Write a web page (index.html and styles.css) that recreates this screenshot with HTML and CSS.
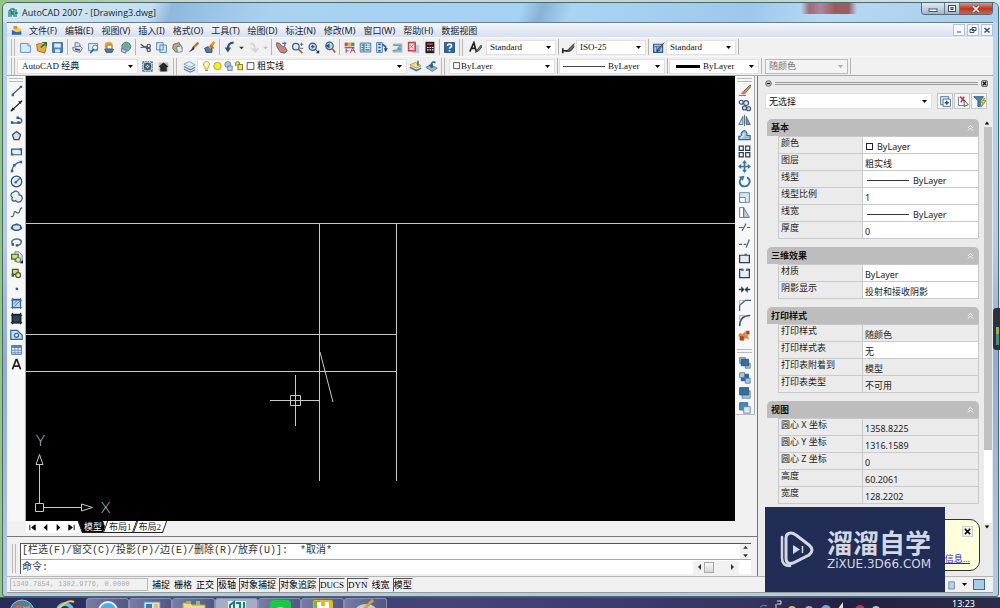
FILE: index.html
```html
<!DOCTYPE html>
<html lang="zh-CN">
<head>
<meta charset="utf-8">
<title>AutoCAD 2007 - [Drawing3.dwg]</title>
<link rel="stylesheet" href="styles.css">
</head>
<body>
<div class="window">
  <header class="titlebar">
    <svg class="app-icon" viewBox="0 0 10 10"><rect width="10" height="10" fill="#e4f4f2"/><path d="M1 9V3l2-2v8M4 1h2v3H4v2h2v3M8 1v8M7 5h3" stroke="#12807c" fill="none" stroke-width="1.3"/></svg>
    <h1 class="title">AutoCAD 2007 - [Drawing3.dwg]</h1>
    <div class="win-buttons">
      <button class="win-btn" aria-label="最小化"><svg viewBox="0 0 10 8"><rect x="1" y="4" width="8" height="2.5" fill="#fff" stroke="#556"/></svg></button>
      <button class="win-btn win-max" aria-label="最大化"><svg viewBox="0 0 10 8"><rect x="1.5" y=".5" width="7" height="6" fill="#fff" stroke="#445"/><rect x="4" y="2.500" width="2" height="2" fill="#89a" stroke="#445"/></svg></button>
      <button class="win-btn win-close" aria-label="关闭"><svg viewBox="0 0 10 8"><path d="M2 1l6 6M8 1L2 7" stroke="#733" stroke-width="3"/><path d="M2 1l6 6M8 1L2 7" stroke="#fff" stroke-width="1.7"/></svg></button>
    </div>
  </header>
  <div class="client">
    <nav class="menubar">
      <svg class="doc-icon" viewBox="0 0 14 12"><path d="M2 6l5-5 5 4v6H2z" fill="#f8cf3b"/><path d="M1 5l5 3 6-1v4H1z" fill="#2f67b8"/><path d="M3 1h4v3H3z" fill="#d8842a"/></svg>
      <button>文件(F)</button><button>编辑(E)</button><button>视图(V)</button><button>插入(I)</button><button>格式(O)</button><button>工具(T)</button><button>绘图(D)</button><button>标注(N)</button><button>修改(M)</button><button>窗口(W)</button><button>帮助(H)</button><button>数据视图</button>
      <div class="mdi">
        <button aria-label="最小化文档"><svg viewBox="0 0 10 10"><path d="M3 7h4" stroke="#357"/></svg></button>
        <button aria-label="还原文档"><svg viewBox="0 0 10 10"><path d="M4 2.500h4v3H4zM2 4.500h4v3H2z" fill="#fff" stroke="#357"/></svg></button>
        <button aria-label="关闭文档"><svg viewBox="0 0 10 10"><path d="M2.500 3l5 4.500M7.500 3l-5 4.500" stroke="#357" stroke-width="1.5"/></svg></button>
      </div>
    </nav>

    <div class="toolbar">
      <i class="grip"></i>
      <button class="tool" aria-label="新建"><svg viewBox="0 0 16 16"><path d="M2 3h9l3 3v8H2z" fill="#d5ebfa" stroke="#467fae"/><path d="M11 3v3h3" fill="#fff" stroke="#467fae"/></svg></button>
      <button class="tool" aria-label="打开"><svg viewBox="0 0 16 16"><path d="M2 4l5-1 7 3-2 9-9-3z" fill="#e5ad45" stroke="#8b682b"/><path d="M7 8l6-5M9 2h5v4" stroke="#286330" stroke-width="1.500" fill="none"/></svg></button>
      <button class="tool" aria-label="保存"><svg viewBox="0 0 16 16"><path d="M2 2h12v12H2z" fill="#4a87c5" stroke="#245487"/><path d="M4 3h8v5H4zM5 10h6v4H5z" fill="#dfeef9"/></svg></button>
      <i class="sep"></i>
      <button class="tool" aria-label="打印"><svg viewBox="0 0 16 16"><path d="M5 7V2h4l2 2v3M2 8l9-2 3 3-3 5-8-2z" fill="#dce2ee" stroke="#53648c"/><path d="M5 10l6 1" stroke="#334a85" stroke-width="2"/></svg></button>
      <button class="tool" aria-label="打印预览"><svg viewBox="0 0 16 16"><path d="M2 3h11v9H2z" fill="#d5e9f8" stroke="#477bac"/><circle cx="10" cy="8" r="3" fill="#eff8ff" stroke="#396389"/><path d="M8 10l-4 5" stroke="#396389" stroke-width="2"/></svg></button>
      <button class="tool" aria-label="发布"><svg viewBox="0 0 16 16"><circle cx="7" cy="6" r="5" fill="#e7a736"/><path d="M5 5h6v5H5z" fill="#fff" stroke="#776040"/><path d="M2 10h11l-2 4H4z" fill="#497db8" stroke="#2c5075"/></svg></button>
      <button class="tool" aria-label="三维发布"><svg viewBox="0 0 16 16"><circle cx="9" cy="7" r="5.500" fill="#73a9b8" stroke="#45697e"/><path d="M5 4l5-1 3 5-5 1z" fill="#6cae73"/><path d="M3 9l6 2-1 4-5-2z" fill="#bacbda" stroke="#496985"/></svg></button>
      <i class="sep"></i>
      <button class="tool" aria-label="剪切"><svg viewBox="0 0 16 16"><path d="M2 4l9 6M2 8l9-1" stroke="#455260" stroke-width="1.500"/><circle cx="12" cy="6" r="2" fill="none" stroke="#445767" stroke-width="1.500"/><circle cx="12" cy="11" r="2" fill="none" stroke="#445767" stroke-width="1.500"/></svg></button>
      <button class="tool" aria-label="复制"><svg viewBox="0 0 16 16"><path d="M2 2h8v9H2zM6 5h8v9H6z" fill="#d7ebfa" stroke="#3e76a8"/></svg></button>
      <button class="tool" aria-label="粘贴"><svg viewBox="0 0 16 16"><path d="M3 4l7-2 4 7-8 5-4-5z" fill="#b7aa80" stroke="#655e4a"/><path d="M7 7l6-1 1 7-6 1z" fill="#dceaf3" stroke="#628099"/></svg></button>
      <button class="tool" aria-label="特性匹配"><svg viewBox="0 0 16 16"><path d="M14 2L7 9" stroke="#b77832" stroke-width="3"/><path d="M8 7L2 14l7-4z" fill="#273440"/></svg></button>
      <button class="tool" aria-label="块编辑器"><svg viewBox="0 0 16 16"><path d="M2 9l4-2 5 2v5H4z" fill="#507cad" stroke="#243f5d"/><path d="M14 1L8 9" stroke="#e59421" stroke-width="3"/><path d="M9 5l4 4" stroke="#c45d25" stroke-width="2"/></svg></button>
      <i class="sep"></i>
      <button class="tool" aria-label="放弃"><svg viewBox="0 0 16 16"><path d="M13 2c-5 0-7 3-7 8" fill="none" stroke="#285180" stroke-width="2.500"/><path d="M2 8h8l-4 6z" fill="#285180"/></svg></button>
      <button class="tool tiny" aria-label="放弃列表"><svg viewBox="0 0 8 16"><path d="M1 7h6L4 10z" fill="#333"/></svg></button>
      <button class="tool" aria-label="重做"><svg viewBox="0 0 16 16"><path d="M4 3c4 0 6 3 6 8M6 9l4 4 4-4" fill="none" stroke="#cbd0d4" stroke-width="2"/></svg></button>
      <button class="tool tiny" aria-label="重做列表"><svg viewBox="0 0 8 16"><path d="M1 7h6L4 10z" fill="#bbb"/></svg></button>
      <i class="sep"></i>
      <button class="tool" aria-label="实时平移"><svg viewBox="0 0 16 16"><path d="M2 2l4 1 2 3 4 1 3 5-3 3-5-1-3-4-2-4z" fill="#c18b7b" stroke="#734c55"/><path d="M9 3h5M12 1v5" stroke="#3974ad" stroke-width="1.500"/></svg></button>
      <button class="tool" aria-label="实时缩放"><svg viewBox="0 0 16 16"><circle cx="6" cy="7" r="4" fill="#d9efff" stroke="#385c80" stroke-width="1.500"/><path d="M9 10l5 5" stroke="#986734" stroke-width="2"/><path d="M11 4h4M13 2v4M11 9h4" stroke="#2c5680"/></svg></button>
      <button class="tool" aria-label="窗口缩放"><svg viewBox="0 0 16 16"><circle cx="7" cy="7" r="4.500" fill="#b9d8ee" stroke="#385c80" stroke-width="1.500"/><path d="M10 10l4 4M5 7h4M7 5v4" stroke="#2c5680" stroke-width="1.500"/><path d="M11 15h4v-4z" fill="#222"/></svg></button>
      <button class="tool" aria-label="缩放上一个"><svg viewBox="0 0 16 16"><circle cx="8" cy="6" r="4.500" fill="#b9d8ee" stroke="#385c80" stroke-width="1.500"/><path d="M11 9l4 5" stroke="#986734" stroke-width="2"/><path d="M3 6l5-3v6z" fill="#204b80"/></svg></button>
      <i class="sep"></i>
      <button class="tool" aria-label="特性"><svg viewBox="0 0 16 16"><path d="M2 2h4v4H2z" fill="#dc4145"/><path d="M6 2h4v4H6z" fill="#eab42e"/><path d="M10 2h4v4h-4z" fill="#489253"/><path d="M2 7h12v2H2z" fill="#5b76aa"/><path d="M4 9v6M3 12h4M9 15l3-7 3 7M10 12h4" stroke="#a33553" fill="none"/></svg></button>
      <button class="tool" aria-label="设计中心"><svg viewBox="0 0 16 16"><path d="M1.500 2.500h13v11h-13z" fill="#cbe3f3" stroke="#366a98"/><path d="M6 3v10M3 5h2M3 8h2M3 11h2M8 5h2M12 5h1M8 8h2M12 8h1M8 11h5" stroke="#3e6d92" stroke-width="1.500"/></svg></button>
      <button class="tool" aria-label="工具选项板"><svg viewBox="0 0 16 16"><path d="M2 2h7v12H2z" fill="#cbe3f3" stroke="#366a98"/><path d="M4 4h3M4 8h3M4 12h3M9 4l4 3v6" fill="none" stroke="#2c5aa0" stroke-width="2"/><path d="M11 9h5l-3 4z" fill="#234a82"/></svg></button>
      <button class="tool" aria-label="图纸集"><svg viewBox="0 0 16 16"><path d="M3 3h11v11H2z" fill="#9db5c8"/><path d="M2 5l10 1-4 3 4 1-10 2" fill="#e0ebf2" stroke="#55809f"/></svg></button>
      <button class="tool" aria-label="标记集"><svg viewBox="0 0 16 16"><path d="M7 5h8v10H7z" fill="#bfccd6"/><path d="M2 2h8v10H2z" fill="#fff" stroke="#d13c4d" stroke-width="2"/><path d="M4 9l4-5M4 5l4 5" stroke="#d13c4d"/></svg></button>
      <button class="tool" aria-label="计算器"><svg viewBox="0 0 16 16"><path d="M3 1h11v14H3z" fill="#241f23"/><path d="M5 3h7v2H5z" fill="#c44548"/><path d="M5 8h2M8 8h2M11 8h2M5 11h2M8 11h2M11 11h2" stroke="#eee" stroke-width="1.500"/></svg></button>
      <i class="sep"></i>
      <button class="tool" aria-label="帮助"><svg viewBox="0 0 16 16"><rect x="2" y="2" width="12" height="12" fill="#2d669b" stroke="#194368"/><path d="M5.500 6c0-3 5-3 5 0 0 2-2.500 1.500-2.500 3.500M8 11v2" fill="none" stroke="#fff" stroke-width="2"/></svg></button>
      <i class="grip"></i>
      <button class="tool style-tool" aria-label="文字样式"><svg viewBox="0 0 16 16"><path d="M1 13L6 2l3 11M3 9h5" stroke="#222" stroke-width="2" fill="none"/><path d="M15 5l-5 6-2 3 4-2 4-5z" fill="#747c82" stroke="#333"/></svg></button>
      <span class="combo style-combo"><select aria-label="文字样式"><option>Standard</option></select><svg class="arrow" viewBox="0 0 7 4"><path d="M0 0h7L3.500 4z"/></svg></span>
      <i class="sep"></i>
      <button class="tool" aria-label="标注样式"><svg viewBox="0 0 16 16"><path d="M1 9v6M1 12h9" stroke="#222" stroke-width="2"/><path d="M15 3L8 10l-3 3 6-1 4-5" fill="#646a6b" stroke="#222"/></svg></button>
      <span class="combo style-combo"><select aria-label="标注样式"><option>ISO-25</option></select><svg class="arrow" viewBox="0 0 7 4"><path d="M0 0h7L3.500 4z"/></svg></span>
      <i class="sep"></i>
      <button class="tool" aria-label="表格样式"><svg viewBox="0 0 16 16"><path d="M2 4h11v10H2z" fill="#aacbea" stroke="#2a5b91" stroke-width="1.500"/><path d="M3 7h9M6 7v7" stroke="#2a5b91"/><path d="M15 2L7 10l-1 3 4-2" fill="#617d90" stroke="#234"/></svg></button>
      <span class="combo style-combo"><select aria-label="表格样式"><option>Standard</option></select><svg class="arrow" viewBox="0 0 7 4"><path d="M0 0h7L3.500 4z"/></svg></span>
      <i class="sep"></i>
    </div>

    <div class="toolbar">
      <i class="grip"></i>
      <span class="combo workspace-combo"><select aria-label="工作空间"><option>AutoCAD 经典</option></select><svg class="arrow" viewBox="0 0 7 4"><path d="M0 0h7L3.500 4z"/></svg></span>
      <button class="tool" aria-label="工作空间设置"><svg viewBox="0 0 16 16"><path d="M2 2h12v12H2z" fill="#bfcedb" stroke="#4e6477" stroke-dasharray="2 1"/><circle cx="8" cy="8" r="3.500" fill="none" stroke="#304d68" stroke-width="2"/><path d="M2 2l12 12M14 2L2 14" stroke="#526c81"/></svg></button>
      <button class="tool" aria-label="我的工作空间"><svg viewBox="0 0 16 16"><path d="M2 3h12v11H2z" fill="#bcc0c4"/><path d="M2 8l6-5 6 5-2 1v5H4V9z" fill="#282828"/></svg></button>
      <i class="grip grip-wide"></i>
      <button class="tool" aria-label="图层特性"><svg viewBox="0 0 16 16"><path d="M1 5l7-3 7 4-6 3z" fill="#e3eef5" stroke="#6e9abd"/><path d="M1 8l8 4 6-3M1 11l8 4 6-3" stroke="#4c7fa8" stroke-width="1.500" fill="none"/></svg></button>
      <span class="combo layer-combo">
        <svg class="mini" viewBox="0 0 12 16"><path d="M4 10C0 5 3 2 6 2s6 3 2 8v2H4z" fill="#fff59c" stroke="#958a40"/><path d="M4 14h4" stroke="#555"/></svg>
        <svg class="mini" viewBox="0 0 12 16"><circle cx="6" cy="8" r="5" fill="#f4ed2a" stroke="#968e28"/></svg>
        <svg class="mini" viewBox="0 0 12 16"><circle cx="5" cy="6" r="4" fill="#a9c4d7" stroke="#58788f"/><path d="M5 8h6v6H5z" fill="#b2d3e9" stroke="#58788f"/></svg>
        <svg class="mini" viewBox="0 0 12 16"><path d="M1 8V4q3-4 5 0v3M4 6h6v7H4z" fill="#f2e660" stroke="#8c862e" stroke-width="1.500"/></svg>
        <svg class="mini" viewBox="0 0 12 16"><path d="M1.500 3.500h9v9h-9z" fill="#fff" stroke="#222"/></svg>
        <select aria-label="图层"><option>粗实线</option></select><svg class="arrow" viewBox="0 0 7 4"><path d="M0 0h7L3.500 4z"/></svg></span>
      <button class="tool" aria-label="置为当前"><svg viewBox="0 0 16 16"><path d="M1 6l7-3 7 4-6 3z" fill="#eee27c" stroke="#a49136"/><path d="M1 9l8 4 6-3" stroke="#4c7fa8" stroke-width="2" fill="none"/><path d="M11 1v6" stroke="#416e98" stroke-width="2"/></svg></button>
      <button class="tool" aria-label="上一个图层"><svg viewBox="0 0 16 16"><path d="M1 9l6-3 8 4-6 4z" fill="#9bb8cf" stroke="#45708f"/><path d="M13 3C7 1 7 7 10 9" stroke="#305b84" stroke-width="2" fill="none"/><path d="M4 6l6-1-2 5z" fill="#305b84"/></svg></button>
      <i class="grip grip-wide"></i>
      <span class="combo prop-combo"><svg class="mini swatch" viewBox="0 0 10 16"><path d="M.5 3.500h8v8h-8z" fill="#fff" stroke="#222"/></svg><select aria-label="颜色"><option>ByLayer</option></select><svg class="arrow" viewBox="0 0 7 4"><path d="M0 0h7L3.500 4z"/></svg></span>
      <i class="sep"></i>
      <span class="combo prop-combo"><i class="line-sample"></i><select aria-label="线型"><option>ByLayer</option></select><svg class="arrow" viewBox="0 0 7 4"><path d="M0 0h7L3.500 4z"/></svg></span>
      <i class="sep"></i>
      <span class="combo weight-combo"><i class="line-sample thick"></i><select aria-label="线宽"><option>ByLayer</option></select><svg class="arrow" viewBox="0 0 7 4"><path d="M0 0h7L3.500 4z"/></svg></span>
      <i class="sep"></i>
      <span class="combo plot-combo"><select aria-label="打印样式" disabled><option>随颜色</option></select><svg class="arrow" viewBox="0 0 7 4"><path d="M0 0h7L3.500 4z"/></svg></span>
      <i class="sep"></i>
    </div>

    <main class="workspace">
      <section class="editor">
        <div class="drawing-row">
          <aside class="side-tools">
            <i class="hgrip"></i>
            <div class="draw-list">
              <button class="tool" aria-label="直线"><svg viewBox="0 0 16 16"><path d="M3 13L13 4" stroke="#345d80" stroke-width="1.500"/><path d="M2 12h3v3H2zM12 2h3v3h-3z" fill="#2e6799"/></svg></button>
              <button class="tool" aria-label="构造线"><svg viewBox="0 0 16 16"><path d="M1 15L15 2" stroke="#202830" stroke-width="1.500"/><path d="M1 15l2-5 3 3zM15 2l-5 1 3 3z" fill="#222"/></svg></button>
              <button class="tool" aria-label="多段线"><svg viewBox="0 0 16 16"><path d="M2 11h10c4-1 3-6-2-6" fill="none" stroke="#376f9b" stroke-width="1.800"/><path d="M1 9h3v3H1zM9 9h3v3H9zM8 3h3v3H8z" fill="#275b88"/></svg></button>
              <button class="tool" aria-label="正多边形"><svg viewBox="0 0 16 16"><path d="M8 3l5 4-2 6H5L3 7z" fill="#d8e0e5" stroke="#374b5b" stroke-width="1.500"/></svg></button>
              <button class="tool" aria-label="矩形"><svg viewBox="0 0 16 16"><path d="M2 5h12v7H2z" fill="#e4edf3" stroke="#3b5670" stroke-width="1.500"/><path d="M1 10h3v3H1zM12 4h3v3h-3z" fill="#346b9b"/></svg></button>
              <button class="tool" aria-label="圆弧"><svg viewBox="0 0 16 16"><path d="M2 15Q3 4 14 2" fill="none" stroke="#396b94" stroke-width="1.500"/><path d="M1 12h3v3H1zM4 5h3v3H4zM12 1h3v3h-3z" fill="#2e6799"/></svg></button>
              <button class="tool" aria-label="圆"><svg viewBox="0 0 16 16"><circle cx="8" cy="8" r="6.500" fill="#e5edf3" stroke="#2b4e6d" stroke-width="1.500"/><path d="M7 9l5-5" stroke="#28689b" stroke-width="1.500"/><circle cx="7" cy="9" r="1.500" fill="#28689b"/></svg></button>
              <button class="tool" aria-label="修订云线"><svg viewBox="0 0 16 16"><path d="M4 3c3-3 8-1 7 3 5 0 5 6 2 8-3 2-6 0-6-1-3 2-6-1-4-4-3-1-2-6 1-6z" fill="#eaf1f6" stroke="#3f5e78" stroke-width="1.500"/></svg></button>
              <button class="tool" aria-label="样条曲线"><svg viewBox="0 0 16 16"><path d="M1 13c5 1 3-6 5-6s3 3 5 1 0-5 4-6" fill="none" stroke="#4b5c6a" stroke-width="1.400"/></svg></button>
              <button class="tool" aria-label="椭圆"><svg viewBox="0 0 16 16"><ellipse cx="8" cy="8" rx="5.500" ry="3.500" fill="#d7e6f0" stroke="#274864" stroke-width="1.500"/><path d="M1 7h3v3H1zM12 7h3v3h-3zM7 3h3v2H7z" fill="#24689d"/></svg></button>
              <button class="tool" aria-label="椭圆弧"><svg viewBox="0 0 16 16"><path d="M3 10C0 5 6 3 11 4c5 2 3 7-2 8" fill="none" stroke="#427295" stroke-width="1.800"/><path d="M2 9h3v3H2zM7 10h3v3H7z" fill="#275b88"/></svg></button>
              <button class="tool" aria-label="插入块"><svg viewBox="0 0 16 16"><path d="M6 1h5l4 4v8H6z" fill="#d1e6f5" stroke="#49799e"/><path d="M2 4h8v6H2z" fill="#cee36e" stroke="#48632a" stroke-width="1.500"/><circle cx="10" cy="11" r="3" fill="#e2edaf" stroke="#425437"/><path d="M12 15h4v-4z"/></svg></button>
              <button class="tool" aria-label="创建块"><svg viewBox="0 0 16 16"><path d="M3 3h7v6H3z" fill="#d0df7c" stroke="#475f2b" stroke-width="1.500"/><circle cx="10" cy="10" r="3" fill="#e4edb9" stroke="#475f2b" stroke-width="1.500"/><path d="M2 8h3v4H2z" fill="#35536b"/></svg></button>
              <button class="tool" aria-label="点"><svg viewBox="0 0 16 16"><path d="M7 7h3v3H7z" fill="#246291"/></svg></button>
              <button class="tool" aria-label="图案填充"><svg viewBox="0 0 16 16"><path d="M3 3h10v10H3z" fill="#b9d4ec" stroke="#2c5a87" stroke-width="1.500"/><path d="M3 1v14M13 1v14M1 4h14M1 13h14M5 12l7-7M5 8l4-4" stroke="#3e6e99"/></svg></button>
              <button class="tool" aria-label="渐变色"><svg viewBox="0 0 16 16"><path d="M3 3h10v10H3z" fill="#30465a" stroke="#17222b" stroke-width="2"/><path d="M3 1v14M13 1v14M1 4h14M1 13h14" stroke="#1e2b36" stroke-width="1.500"/></svg></button>
              <button class="tool" aria-label="面域"><svg viewBox="0 0 16 16"><path d="M1 14V3h8l6 6v5z" fill="#c8dff0" stroke="#2d6899" stroke-width="1.500"/><circle cx="8" cy="9" r="2.500" fill="#f3f8fb" stroke="#2d6899" stroke-width="1.500"/></svg></button>
              <button class="tool" aria-label="表格"><svg viewBox="0 0 16 16"><path d="M2 3h12v11H2z" fill="#dfeaf9" stroke="#3d60a2"/><path d="M2 3h12v3H2z" fill="#547bc0"/><path d="M2 9h12M2 12h12M6 5v9M10 5v9" stroke="#6484c2"/></svg></button>
              <button class="tool" aria-label="多行文字"><svg viewBox="0 0 16 16"><path d="M3 14L7.500 2h1L13 14M5 10h6" stroke="#222" stroke-width="2" fill="none"/></svg></button>
            </div>
          </aside>
          <div class="canvas">
            <svg class="drawing" viewBox="0 0 709 445" preserveAspectRatio="xMinYMin slice">
              <g stroke="#c9c9c9" fill="none">
                <path d="M0 147.500H709M0 258.500H370M0 295.500H370M293.500 147V405M370.500 147V405M294 276L307 326"/>
                <path d="M244 324.500H294M269.500 299V350M264.500 319.500h10v10h-10z"/>
                <path d="M9.500 427.500h8v8h-8zM13.500 427V389M10 388.500h7l-3.500-10zM17 431.500H55M55.500 428v7l11-3.500z"/>
              </g>
              <text x="75" y="437">X</text><text x="10" y="370">Y</text>
            </svg>
          </div>
          <aside class="side-tools right-tools">
            <i class="hgrip"></i>
            <div class="modify-list">
              <button class="tool" aria-label="删除"><svg viewBox="0 0 16 16"><path d="M15 1L7 9l2 2 7-8z" fill="#c7a456" stroke="#665334"/><path d="M7 8l-4 4 5 1 2-2z" fill="#d67c6a"/><path d="M1 14h9" stroke="#555"/></svg></button>
              <button class="tool" aria-label="复制对象"><svg viewBox="0 0 16 16"><circle cx="4" cy="4" r="2.500" fill="#dfe8ee" stroke="#38556d" stroke-width="1.400"/><circle cx="10" cy="5" r="3" fill="#dfe8ee" stroke="#38556d" stroke-width="1.400"/><circle cx="8" cy="11" r="2.500" fill="#c3dbea" stroke="#38556d" stroke-width="1.400"/><circle cx="13" cy="12" r="2.500" fill="#c3dbea" stroke="#38556d" stroke-width="1.400"/></svg></button>
              <button class="tool" aria-label="镜像"><svg viewBox="0 0 16 16"><path d="M6 3v10H1z" fill="#cfdde8" stroke="#375974"/><path d="M10 3v10h5z" fill="#6b9dc5" stroke="#375974"/><path d="M8 1v14" stroke="#37536a"/></svg></button>
              <button class="tool" aria-label="偏移"><svg viewBox="0 0 16 16"><path d="M1 13V9h3V5q4-6 7 0v3h4v5z" fill="#9bc4e4" stroke="#35688e" stroke-width="1.400"/><path d="M4 12V9h3V5" stroke="#fff" fill="none"/></svg></button>
              <button class="tool" aria-label="阵列"><svg viewBox="0 0 16 16"><path d="M1.500 1.500h5v5h-5zM9.500 1.500h5v5h-5zM1.500 9.500h5v5h-5zM9.500 9.500h5v5h-5z" fill="#fff" stroke="#303b45" stroke-width="1.500"/></svg></button>
              <button class="tool" aria-label="移动"><svg viewBox="0 0 16 16"><path d="M8 0l3 4H9v3h3V5l4 3-4 3V9H9v3h2l-3 4-3-4h2V9H4v2L0 8l4-3v2h3V4H5z" fill="#3975aa"/></svg></button>
              <button class="tool" aria-label="旋转"><svg viewBox="0 0 16 16"><path d="M5 3c-5 4-3 11 3 11s9-8 3-11" fill="none" stroke="#39739f" stroke-width="2.300"/><path d="M1 2l7-1-2 6z" fill="#39739f"/></svg></button>
              <button class="tool" aria-label="缩放"><svg viewBox="0 0 16 16"><path d="M2 2h12v12H2z" fill="#d4e5f2" stroke="#527997"/><path d="M2 8h7v6H2z" fill="#fff" stroke="#527997"/></svg></button>
              <button class="tool" aria-label="拉伸"><svg viewBox="0 0 16 16"><path d="M2 2h5v12H2z" fill="#fff" stroke="#48667f"/><path d="M7 2l7 12H7z" fill="#bdd2e1" stroke="#48667f"/></svg></button>
              <button class="tool" aria-label="修剪"><svg viewBox="0 0 16 16"><path d="M1 8h5M11 8h4M5 12l5-9" stroke="#316691" stroke-width="1.500"/></svg></button>
              <button class="tool" aria-label="延伸"><svg viewBox="0 0 16 16"><path d="M1 9h4M7 9h3M10 13l4-10" stroke="#316691" stroke-width="1.500"/></svg></button>
              <button class="tool" aria-label="打断于点"><svg viewBox="0 0 16 16"><path d="M2 4h12v9H2z" fill="#e6edf2" stroke="#303e4d" stroke-width="1.500"/><path d="M8 2h3v3H8z" fill="#3a74a2"/></svg></button>
              <button class="tool" aria-label="打断"><svg viewBox="0 0 16 16"><path d="M6 3H2v10h12V3h-4" fill="#e6edf2" stroke="#303e4d" stroke-width="1.500"/><path d="M4 2h3v3H4zM10 2h3v3h-3z" fill="#3a74a2"/></svg></button>
              <button class="tool" aria-label="合并"><svg viewBox="0 0 16 16"><path d="M1 8h5M10 8h5" stroke="#203f5b" stroke-width="2"/><path d="M4 4l4 4-4 4zM12 4L8 8l4 4z" fill="#203f5b"/></svg></button>
              <button class="tool" aria-label="倒角"><svg viewBox="0 0 16 16"><path d="M2 16V9l7-6h7" fill="none" stroke="#3c6481" stroke-width="1.500"/><path d="M2 9V3h7" stroke="#9daab4" fill="none"/></svg></button>
              <button class="tool" aria-label="圆角"><svg viewBox="0 0 16 16"><path d="M2 16Q2 3 15 3" fill="none" stroke="#265c86" stroke-width="2"/><path d="M2 9V3h7" stroke="#9daab4" fill="none"/></svg></button>
              <button class="tool" aria-label="分解"><svg viewBox="0 0 16 16"><path d="M2 5l4 1 3-4 1 5 5-3-3 5 2 4-5-2-3 4-1-5-5-1z" fill="#d58b39"/><path d="M2 9h5v5H2zM10 2h4v4h-4z" fill="#a6423c"/></svg></button>
            </div>
            <i class="hgrip"></i>
            <div class="order-list">
              <button class="tool" aria-label="前置"><svg viewBox="0 0 16 16"><path d="M2 2h7v7H2zM9 9h6v6H9z" fill="#a7c7df" stroke="#557b9a"/><path d="M4 4h9v8H4z" fill="#396e9b" stroke="#1e517c"/></svg></button>
              <button class="tool" aria-label="后置"><svg viewBox="0 0 16 16"><path d="M4 4h9v8H4z" fill="#2f6797" stroke="#1e517c"/><path d="M2 2h6v6H2zM9 9h6v6H9z" fill="#a7c7df" stroke="#557b9a"/></svg></button>
              <button class="tool" aria-label="置于对象之上"><svg viewBox="0 0 16 16"><path d="M5 6h10v9H5z" fill="#a7c7df" stroke="#557b9a"/><path d="M2 2h11v9H2z" fill="#396e9b" stroke="#1e517c"/></svg></button>
              <button class="tool" aria-label="置于对象之下"><svg viewBox="0 0 16 16"><path d="M2 2h10v9H2z" fill="#498ab9" stroke="#28618d"/><path d="M7 7h8v8H7z" fill="#d9e8f3" stroke="#557b9a"/></svg></button>
            </div>
          </aside>
        </div>
        <div class="tabs">
          <button class="tab-nav" aria-label="第一个"><svg viewBox="0 0 10 10"><path d="M2 2v6M8 2v6L4 5z" stroke="#000"/></svg></button>
          <button class="tab-nav" aria-label="上一个"><svg viewBox="0 0 10 10"><path d="M7 1v8L3 5z"/></svg></button>
          <button class="tab-nav" aria-label="下一个"><svg viewBox="0 0 10 10"><path d="M3 1v8l4-4z"/></svg></button>
          <button class="tab-nav" aria-label="最后一个"><svg viewBox="0 0 10 10"><path d="M8 2v6M2 2v6l4-3z" stroke="#000"/></svg></button>
          <button class="tab active">模型</button><button class="tab">布局1</button><button class="tab">布局2</button>
        </div>
        <div class="command">
          <i class="vgrip"></i>
          <div class="command-box">
            <div class="history"><p>[栏选(F)/窗交(C)/投影(P)/边(E)/删除(R)/放弃(U)]:&nbsp; *取消*</p>
              <div class="vscroll"><svg viewBox="0 0 8 16"><path d="M2 5h5L4.500 2zM2 11h5l-2.500 3z" fill="#333"/></svg></div></div>
            <div class="prompt"><label for="cmd">命令:</label><input id="cmd" type="text">
              <div class="hscroll"><svg viewBox="0 0 6 8"><path d="M5 1v6L2 4z" fill="#333"/></svg><i class="hthumb"></i><svg viewBox="0 0 6 8"><path d="M1 1v6l3-3z" fill="#333"/></svg></div></div>
          </div>
        </div>
      </section>

      <aside class="palette">
        <div class="palette-head">
          <svg viewBox="0 0 8 8"><circle cx="4" cy="4" r="3.200" fill="#ddd" stroke="#555"/><path d="M2 4h4" stroke="#000" stroke-width="1.500"/></svg>
          <i class="palette-bar"></i>
          <svg viewBox="0 0 8 8"><rect x=".5" y=".5" width="7" height="7" rx="2" fill="#ccc" stroke="#555"/><path d="M2 2l4 4M6 2L2 6" stroke="#000" stroke-width="1.300"/></svg>
        </div>
        <div class="selection">
          <span class="combo selection-combo"><select aria-label="选择"><option>无选择</option></select><svg class="arrow" viewBox="0 0 7 4"><path d="M0 0h7L3.500 4z"/></svg></span>
          <button class="pbtn" aria-label="切换 PICKADD"><svg viewBox="0 0 16 16"><path d="M2 2h10v10H2z" fill="#d9e7f1" stroke="#456783"/><path d="M5 5h9v9H5z" fill="#fff" stroke="#315d82"/><path d="M7 9.500h5M9.500 7v5" stroke="#23527b" stroke-width="2"/></svg></button>
          <button class="pbtn" aria-label="选择对象"><svg viewBox="0 0 16 16"><path d="M3 2v11h8" fill="#fff" stroke="#4a6c89"/><path d="M5 2l6 6M10 2L6 9" stroke="#c5384a" stroke-width="2"/><path d="M10 6v8l5-2z" fill="#fff" stroke="#333"/></svg></button>
          <button class="pbtn" aria-label="快速选择"><svg viewBox="0 0 16 16"><path d="M1 2h12l-4 5v7H6V7z" fill="#4c86b5" stroke="#2a5274"/><path d="M14 4l-5 5h3l-2 6 6-8h-3z" fill="#eee125" stroke="#827927"/></svg></button>
        </div>
        <div class="palette-body">
          <div class="groups">
            <section><h2>基本<button aria-label="折叠基本"><svg viewBox="0 0 8 8"><path d="M1 4l3-3 3 3M1 7l3-3 3 3"/></svg></button></h2>
              <table>
                <tr><th scope="row">颜色</th><td class="edit"><i class="box"></i>ByLayer</td></tr>
                <tr><th scope="row">图层</th><td class="edit">粗实线</td></tr>
                <tr><th scope="row">线型</th><td class="edit"><i class="rule"></i>ByLayer</td></tr>
                <tr><th scope="row">线型比例</th><td class="edit">1</td></tr>
                <tr><th scope="row">线宽</th><td class="edit"><i class="rule"></i>ByLayer</td></tr>
                <tr><th scope="row">厚度</th><td class="edit">0</td></tr>
              </table></section>
            <section><h2>三维效果<button aria-label="折叠三维效果"><svg viewBox="0 0 8 8"><path d="M1 4l3-3 3 3M1 7l3-3 3 3"/></svg></button></h2>
              <table>
                <tr><th scope="row">材质</th><td class="edit">ByLayer</td></tr>
                <tr><th scope="row">阴影显示</th><td class="edit">投射和接收阴影</td></tr>
              </table></section>
            <section><h2>打印样式<button aria-label="折叠打印样式"><svg viewBox="0 0 8 8"><path d="M1 4l3-3 3 3M1 7l3-3 3 3"/></svg></button></h2>
              <table>
                <tr><th scope="row">打印样式</th><td>随颜色</td></tr>
                <tr><th scope="row">打印样式表</th><td class="edit">无</td></tr>
                <tr><th scope="row">打印表附着到</th><td>模型</td></tr>
                <tr><th scope="row">打印表类型</th><td>不可用</td></tr>
              </table></section>
            <section><h2>视图<button aria-label="折叠视图"><svg viewBox="0 0 8 8"><path d="M1 4l3-3 3 3M1 7l3-3 3 3"/></svg></button></h2>
              <table>
                <tr><th scope="row">圆心 X 坐标</th><td>1358.8225</td></tr>
                <tr><th scope="row">圆心 Y 坐标</th><td>1316.1589</td></tr>
                <tr><th scope="row">圆心 Z 坐标</th><td>0</td></tr>
                <tr><th scope="row">高度</th><td>60.2061</td></tr>
                <tr><th scope="row">宽度</th><td>128.2202</td></tr>
              </table></section>
          </div>
          <div class="pscroll"><svg viewBox="0 0 8 8"><path d="M1 6h6L4 2z"/></svg><i class="pthumb"></i><i class="ptrack"></i><svg viewBox="0 0 8 8"><path d="M1 2h6L4 6z"/></svg></div>
        </div>
      </aside>
    </main>

    <footer class="status">
      <output class="coords">1349.7854, 1302.9776, 0.0000</output>
      <button>捕捉</button><button>栅格</button><button>正交</button><button class="on">极轴</button><button class="on">对象捕捉</button><button class="on">对象追踪</button><button class="on">DUCS</button><button class="on">DYN</button><button>线宽</button><button class="on">模型</button>
      <span class="tray"><svg class="tray-lock" viewBox="0 0 10 12"><path d="M1 2h7v9H1z" fill="#b8d2e8" stroke="#557e9e"/></svg><svg class="arrow" viewBox="0 0 7 4"><path d="M0 0h7L3.500 4z"/></svg><button class="clean" aria-label="全屏显示"></button></span>
    </footer>
  </div>
</div>

<div class="taskbar">
  <button class="task plain" aria-label="开始"><svg viewBox="0 0 26 11"><circle cx="13" cy="13" r="12" fill="#557c9d" stroke="#a6c6d6"/><path d="M6 8q3-4 7-1v4H5z" fill="#e65c2e"/><path d="M14 7q4 2 7-1v5h-7z" fill="#8bb936"/></svg></button>
  <button class="task plain" aria-label="浏览器"><svg viewBox="0 0 26 11"><circle cx="13" cy="12" r="7" fill="none" stroke="#59bdf0" stroke-width="4"/><path d="M5 11Q15 0 22 3" fill="none" stroke="#f4cb43" stroke-width="2"/></svg></button>
  <button class="task" aria-label="聊天"><svg viewBox="0 0 26 11"><circle cx="13" cy="12" r="9" fill="#4aafe6" stroke="#e1f2fb" stroke-width="2"/><path d="M8 10h10v3H8z" fill="#fff"/></svg></button>
  <button class="task" aria-label="文档"><svg viewBox="0 0 26 11"><path d="M6 3h16v9H6z" fill="#cfe5f5" stroke="#6791b3"/><path d="M8 5h6v6H8z" fill="#3679b0"/><path d="M16 5h4v4h-4z" fill="#efbc54"/></svg></button>
  <button class="task" aria-label="文件夹"><svg viewBox="0 0 26 11"><path d="M2 4h7l2 2h13v6H2z" fill="#f0db82" stroke="#bea04f"/><path d="M5 2h5v3H5zM15 2h4v4h-4z" fill="#8dbb69"/></svg></button>
  <button class="task current" aria-label="AutoCAD"><svg viewBox="0 0 26 11"><path d="M4 2h18v10H4z" fill="#e4f4f2"/><path d="M6 11V6l4-3v9M12 4h4v7M20 3v9" stroke="#158078" stroke-width="2" fill="none"/></svg></button>
  <button class="task" aria-label="消息"><svg viewBox="0 0 26 11"><rect x="3" y="1" width="21" height="14" rx="4" fill="#18c846"/><path d="M9 10q4-4 9 0z" fill="#fff"/></svg></button>
  <button class="task" aria-label="程序"><svg viewBox="0 0 26 11"><rect x="3" y="1" width="20" height="14" rx="2" fill="#dbbc29"/><path d="M4 2h6v10H4z" fill="#77b634"/><path d="M7 3h4v4h4V3h4v8H7z" fill="#fff"/></svg></button>
  <button class="task" aria-label="画图"><svg viewBox="0 0 26 11"><ellipse cx="13" cy="11" rx="10" ry="6" fill="#b7d2e2"/><path d="M20 1L10 11" stroke="#d4a046" stroke-width="3"/><circle cx="8" cy="9" r="2" fill="#efd467"/></svg></button>
  <div class="notify"><svg viewBox="0 0 150 11"><path d="M1 9q3-3 7-1" stroke="#888" fill="none"/><path d="M18 3h4v3h-4M17 6v5" fill="none" stroke="#dde"/><circle cx="33" cy="12" r="4" fill="#e6bc3f"/><circle cx="50" cy="12" r="4" fill="#9eb0bd"/><circle cx="67" cy="12" r="5" fill="#66a9e9"/><path d="M80 11l3-4v4" stroke="#ddd" stroke-width="2"/><circle cx="101" cy="12" r="5" fill="#ca3442"/><circle cx="117" cy="12" r="4" fill="#accde4"/></svg></div>
  <time>13:23</time>
</div>

<aside class="balloon"><button aria-label="关闭通知"><svg viewBox="0 0 8 8"><path d="M1 1l6 6M7 1L1 7" stroke="#000" stroke-width="1.700"/></svg></button><a href="#">信息...</a></aside>
<div class="brand">
  <svg class="brand-mark" viewBox="0 0 36 38"><path d="M3 6v21q0 8 8 8" fill="none" stroke="#d4d8e4" stroke-width="2.500" stroke-linecap="round"/><path d="M12 2Q7 2 7 7v20q0 7 7 5l16-8q6-5 0-10L17 4q-3-2-5-2z" fill="none" stroke="#d4d8e4" stroke-width="3"/><path d="M14 14v9l7-4.500z" fill="#d4d8e4"/><path d="M23.500 15v7" stroke="#d4d8e4" stroke-width="1.500"/></svg>
  <div class="brand-text"><p class="brand-name">溜溜自学</p><p class="brand-url">ZiXUE.3D66.COM</p></div>
</div>
<svg class="edge-widget" viewBox="0 0 7 42"><path d="M7 0H3Q0 0 0 4v34q0 4 3 4h4z" fill="#2b3142"/><path d="M3 19h3v7H3z" fill="#a3a94a"/><path d="M3 26h3v11H3z" fill="#478f7b"/></svg>
</body>
</html>
```
FILE: styles.css
```css
* { box-sizing: border-box; }
body {
  margin: 0;
  height: 100vh;
  min-height: 560px;
  display: flex;
  flex-direction: column;
  overflow: hidden;
  position: relative;
  background: linear-gradient(90deg, #94c583, #c3d8d3 20%, #bfd6cc 80%, #dbe9ee);
  font: 9px "Noto Sans", "Noto Sans CJK SC", sans-serif;
  color: #222;
}
button { border: 0; padding: 0; margin: 0; background: none; font: inherit; color: inherit; }
svg { display: block; }
p, h1, h2 { margin: 0; font-weight: normal; }
i { display: block; flex: none; }

.window {
  flex: 1;
  min-height: 0;
  margin: 2px 1px 0 2px;
  border: 1px solid #4d6674;
  border-radius: 6px 6px 3px 3px;
  display: flex;
  flex-direction: column;
  padding: 0 5px 3px 4px;
  background: linear-gradient(180deg, #b5d6f2, #b3cce6 40%, #91abd5 60%, #b3cbe4);
}
.titlebar {
  flex: none;
  height: 19px;
  margin: 0 -5px 0 -4px;
  padding: 0 5px;
  border-radius: 5px 5px 0 0;
  display: flex;
  align-items: center;
  background:
    linear-gradient(90deg, transparent, #a06b76 15%, #a88a9b 35%, #9c5b62 60%, #9c5b62 85%, transparent) 85% 0 / 56px 11px no-repeat,
    linear-gradient(110deg, #d3e6ee 0, #c4dff0 15%, #8fb9dc 17%, #a9d2f2 27%, #a5d1f3 52%, #87b2d6 54%, #aad4f2 57%, #9dc8ec 75%, #b6d9f4 82%, #a9cdea);
}
.app-icon { width: 10px; height: 10px; margin-right: 4px; }
.title { font: 9px "Open Sans", sans-serif; flex: 1; color: #16242e; }
.win-buttons { display: flex; align-self: flex-start; border: 1px solid #536a7b; border-top: 0; border-radius: 0 0 4px 4px; overflow: hidden; }
.win-btn { width: 23px; height: 11px; display: grid; place-items: center; border-right: 1px solid #637b8d; background: linear-gradient(#dceaf3, #a0b8cb); }
.win-btn svg { width: 10px; height: 8px; }
.win-max { width: 15px; }
.win-close { width: 32px; border: 0; background: linear-gradient(#d99a8d, #b43a2a 50%, #cb644e); }

.client { flex: 1; min-height: 0; display: flex; flex-direction: column; background: #f0f0f0; border-top: 1px solid #647d92; }
.menubar { flex: none; height: 14px; display: flex; align-items: center; gap: 8px; background: linear-gradient(#f4f6fb, #d7dfef); color: #20242c; white-space: nowrap; }
.menubar > button { line-height: 13px; }
.doc-icon { width: 12px; height: 11px; margin: 0 -2px 0 4px; }
.mdi { margin-left: auto; display: flex; gap: 2px; }
.mdi button { width: 12px; height: 12px; border: 1px solid #b4c2d6; background: #f5f8fc; display: grid; place-items: center; }
.mdi svg { width: 10px; height: 10px; }

.toolbar { flex: none; height: 19px; display: flex; align-items: center; padding-left: 2px; border-top: 1px solid #fafafa; }
.tool { flex: none; width: 16px; height: 14px; display: grid; place-items: center; }
.tool svg { width: 13px; height: 13px; }
.tiny { width: 8px; }
.tiny svg { width: 7px; }
.sep { width: 1px; height: 16px; margin: 0 1px 0 2px; background: #b5b5b5; }
.grip { width: 4px; height: 17px; margin: 0 2px; border: 1px solid #b9b9b9; border-width: 0 1px; }
.grip-wide { margin: 0 4px 0 2px; }
.style-tool { width: 21px; }

.combo { flex: none; height: 15px; display: flex; align-items: center; background: #fff; border: 1px solid #e0e0e0; padding: 0 4px 0 3px; font: 9px "Liberation Serif", "Noto Sans CJK SC", serif; }
.combo select { flex: 1; min-width: 0; appearance: none; border: 0; padding: 0; margin: 0; background: none; font: inherit; color: #111; opacity: 1; line-height: 13px; }
.arrow { flex: none; width: 5px; height: 3px; }
.mini { flex: none; width: 11px; height: 12px; }
.swatch { width: 8px; }
.style-combo { width: 70px; }
.workspace-combo { width: 121px; padding-left: 4px; margin-right: 1px; }
.layer-combo { width: 210px; }
.layer-combo select { margin-left: 1px; }
.prop-combo { width: 106px; }
.weight-combo { width: 90px; }
.plot-combo { width: 83px; margin-left: 2px; border-color: #b9b9b9; background: #f3f3f3; }
.plot-combo select { color: #777; }
.plot-combo .arrow { fill: #aaa; }
.line-sample { width: 42px; height: 1px; margin-right: 3px; background: #444; }
.thick { width: 24px; height: 3px; margin: 0 3px 0 3px; background: #000; }

.workspace { flex: 1; min-height: 0; display: flex; border-top: 1px solid #a9a9a9; }
.editor { flex: 1; min-width: 0; display: flex; flex-direction: column; }
.drawing-row { flex: 1; min-height: 0; display: flex; }
.side-tools { flex: none; width: 19px; padding: 2px 0 0 1px; border-right: 1px solid #aaa; background: #f7f7f7; }
.hgrip { height: 4px; margin: 0 2px 1px 1px; border: 1px solid #b9b9b9; border-width: 1px 0; }
.draw-list, .modify-list, .order-list { display: flex; flex-direction: column; justify-content: space-between; }
.draw-list { height: 289px; }
.modify-list { height: 259px; margin-bottom: 7px; }
.order-list { height: 59px; margin-top: 2px; }
.canvas { flex: 1; min-width: 0; min-height: 0; background: #000; overflow: hidden; }
.drawing { width: 100%; height: 100%; }
.drawing text { font: 300 15px Lato, sans-serif; fill: #c9c9c9; }
.right-tools { align-self: flex-start; border-bottom: 1px solid #bbb; width: 20px; margin-right: 2px; }

.tabs { flex: none; height: 12px; margin-left: 19px; display: flex; align-items: stretch; font: 9px "Liberation Serif", "Noto Sans CJK SC", serif; }
.tab-nav { width: 13px; display: grid; place-items: center; background: #fff; }
.tab-nav svg { width: 9px; height: 9px; }
.tab { position: relative; z-index: 0; line-height: 10px; padding: 0 3px 0 4px; white-space: nowrap; }
.tab::before { content: ""; position: absolute; z-index: -1; inset: 0; background: #fff; border: 1px solid #222; border-top: 0; transform: skewX(-20deg); }
.tab.active { color: #fff; margin-left: 2px; }
.tab.active::before { background: #000; transform: skewX(20deg); }

.command { flex: none; display: flex; gap: 4px; margin-top: 3px; padding: 6px 6px 2px 5px; border-top: 1px solid #777; }
.vgrip { width: 4px; margin: 1px 0; border: 1px solid #b9b9b9; border-width: 0 1px; }
.command-box { flex: 1; min-width: 0; background: #fff; border-top: 1px solid #555; border-left: 1px solid #555; font: 10px/14px "Liberation Mono", "Noto Sans CJK SC", monospace; color: #333; }
.history { display: flex; justify-content: space-between; border-bottom: 1px solid #aaa; height: 16px; overflow: hidden; white-space: nowrap; }
.history p { padding-left: 1px; }
.vscroll { width: 11px; background: #f1f1f1; }
.vscroll svg { width: 10px; height: 15px; }
.prompt { display: flex; height: 14px; align-items: center; }
.prompt label { padding-left: 1px; line-height: 13px; }
.prompt input { flex: 1; min-width: 0; height: 12px; padding: 0 2px; border: 0; outline: 0; background: none; font: inherit; }
.hscroll { width: 46px; height: 13px; margin-right: 12px; display: flex; align-items: center; justify-content: space-between; background: #f1f1f1; padding: 0 3px; }
.hscroll svg { width: 6px; height: 8px; }
.hthumb { width: 10px; height: 11px; margin-right: 14px; border: 1px solid #aaa; background: linear-gradient(#f6f6f6, #d5d5d5); }

.palette { flex: none; width: 236px; border-left: 1px solid #777; display: flex; flex-direction: column; padding: 3px 1px 0 7px; background: #ebebeb; }
.palette-head { display: flex; align-items: center; gap: 3px; height: 8px; padding-right: 4px; }
.palette-head svg { width: 7px; height: 7px; }
.palette-bar { flex: 1; height: 3px; border: 1px solid #999; border-width: 1px 0; }
.selection { display: flex; gap: 1px; margin: 6px 5px 10px 0; }
.selection-combo { flex: 1; height: 16px; margin-right: 4px; font-family: "Noto Sans", "Noto Sans CJK SC", sans-serif; }
.pbtn { width: 16px; height: 16px; border: 1px solid #c4c4c4; background: #f6f6f6; display: grid; place-items: center; }
.pbtn svg { width: 13px; height: 13px; }
.palette-body { flex: 1; min-height: 0; display: flex; justify-content: space-between; }
.groups { flex: 1; margin: 0 5px 0 2px; overflow: hidden; }
.groups section { margin-bottom: 8px; }
.groups h2 { height: 17px; padding: 0 5px 0 4px; display: flex; align-items: center; justify-content: space-between; border-radius: 5px 5px 0 0; background: #bdbdbd; font-size: 9px; font-weight: bold; color: #111; }
.groups h2 svg { width: 7px; height: 8px; fill: none; stroke: #fff; }
.groups table { width: calc(100% - 11px); margin-left: 11px; border-collapse: collapse; table-layout: fixed; }
.groups th, .groups td { height: 17px; padding: 0 2px; border: 1px solid #c9c9c9; text-align: left; font-weight: normal; line-height: 12px; white-space: nowrap; }
.groups th { width: 42%; vertical-align: top; }
.groups td { vertical-align: bottom; }
.edit { background: #fff; }
.box { display: inline-block; width: 7px; height: 7px; margin: 0 4px 0 1px; border: 1px solid #222; }
.rule { display: inline-block; width: 42px; height: 1px; margin: 0 4px 3px 2px; background: #333; }
.pscroll { width: 8px; display: flex; flex-direction: column; }
.pscroll svg { width: 6px; height: 8px; }
.pthumb { flex: 79; background: #c1c1c1; }
.ptrack { flex: 18; background: #fff; }
.pscroll svg:last-child { margin-bottom: 45px; }

.status { flex: none; height: 17px; display: flex; align-items: center; gap: 2px; padding: 1px 8px 1px 3px; border-top: 1px solid #b5b5b5; border-bottom: 1px solid #999; font: 9px "Liberation Serif", "Noto Sans CJK SC", serif; }
.coords { width: 138px; height: 13px; border: 1px solid #bbb; padding-left: 1px; font: 7px/11px "Liberation Mono", monospace; color: #aaa; margin-right: 1px; white-space: nowrap; }
.status button { height: 14px; line-height: 12px; border: 1px solid transparent; padding: 0; white-space: nowrap; color: #000; }
.status .on { border-color: #555 #eee #eee #555; }
.tray { margin-left: auto; display: flex; align-items: center; gap: 6px; }
.tray-lock { width: 8px; height: 10px; }
.status .clean { width: 12px; height: 11px; border: 1px solid #3d6a91; background: #a8cbe6; }

.taskbar { flex: none; height: 11px; display: flex; overflow: hidden; border-top: 1px solid #45586a; background: linear-gradient(90deg, #252c5a, #44447a 45%, #3c3c70 60%, #34345f 75%, #22203f 85%, #2c2b4a); color: #fff; }
.task { width: 43px; height: 13px; border: 1px solid #8990b3; border-bottom: 0; border-radius: 3px 3px 0 0; display: flex; justify-content: center; background: linear-gradient(90deg, #777da4, #535683); }
.task svg { width: 26px; height: 11px; flex: none; }
.plain { border-color: transparent; background: none; }
.current { background: #a5acc6; }
.notify { margin-left: auto; width: 150px; }
.notify svg { width: 150px; height: 11px; }
.taskbar time { width: 91px; padding-left: 43px; line-height: 12px; }

.balloon { position: absolute; right: 20px; bottom: 37px; width: 70px; height: 52px; border: 1px solid #333; border-radius: 10px; background: #ffffdc; }
.balloon button { position: absolute; top: 6px; right: 6px; width: 11px; height: 11px; border: 1px solid #ccc; background: #f0f0e6; display: grid; place-items: center; }
.balloon button svg { width: 7px; height: 7px; }
.balloon a { position: absolute; right: 9px; bottom: 5px; color: #22c; }
.brand { position: absolute; right: 55px; bottom: 16px; width: 180px; height: 85px; padding-left: 14px; display: flex; align-items: center; gap: 12px; background: #212d55; color: #d4d8e4; }
.brand-mark { width: 36px; height: 38px; }
.brand-text { padding-bottom: 4px; }
.brand-name { font: bold 26px/32px "Noto Sans CJK SC", sans-serif; }
.brand-url { font: 12px/12px "DejaVu Sans", sans-serif; }
.edge-widget { position: absolute; right: 0; top: 308px; width: 7px; height: 42px; }
```
